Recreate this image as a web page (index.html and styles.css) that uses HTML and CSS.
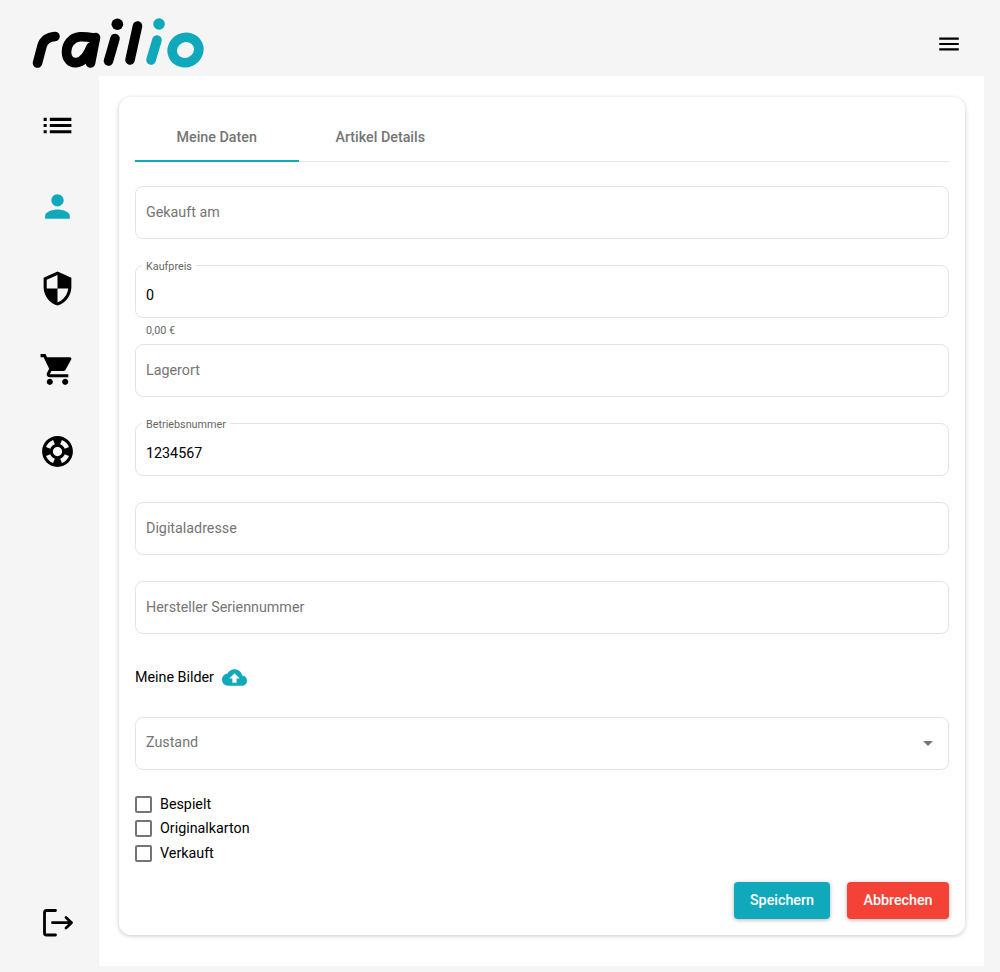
FILE: index.html
```html
<!DOCTYPE html>
<html lang="de">
<head>
<meta charset="utf-8">
<title>railio</title>
<link rel="stylesheet" href="styles.css">
</head>
<body>
<header class="topbar">
  <svg class="logo" viewBox="30 16 180 56" width="180" height="56" fill="none" stroke-linecap="round" stroke-linejoin="round" stroke-width="9.6">
    <g stroke="#000">
      <path d="M37.5 63 L42 46 C44 39 49 37 55 36.5"/>
      <path d="M94 38 C88 37 84 36.5 80 36.8 C71 37.5 66.5 45 66.5 52 C66.5 59 71 63.5 77 62.5 C83 61.5 88 55 91 47"/>
      <path d="M95.5 37.5 L90.5 63"/>
      <path d="M115 38.5 L108.5 61"/>
      <path d="M117.3 24.3 L117.4 24.3" stroke-width="11.5"/>
      <path d="M137.5 26 L130 60"/>
    </g>
    <g stroke="#0fa9bb">
      <path d="M157 40 L151 60"/>
      <path d="M159 24 L159.1 24" stroke-width="11.5"/>
      <ellipse cx="185.5" cy="50" rx="13.5" ry="12.5" transform="rotate(-25 185.5 50)"/>
    </g>
  </svg>
  <button class="menu-btn" type="button" aria-label="Menü">
    <svg viewBox="0 0 24 24" width="26" height="26"><path d="M3 18h18v-2H3v2zm0-5h18v-2H3v2zm0-7v2h18V6H3z"/></svg>
  </button>
</header>
<div class="shell">
  <nav class="sidebar">
    <div class="nav-top">
      <a class="nav-item"><svg viewBox="0 0 24 24" class="nav-icon"><path d="M3 13h2v-2H3v2zm0 4h2v-2H3v2zm0-8h2V7H3v2zm4 4h14v-2H7v2zm0 4h14v-2H7v2zM7 7v2h14V7H7z"/></svg></a>
      <a class="nav-item active"><svg viewBox="0 0 24 24" class="nav-icon"><path d="M12 12c2.21 0 4-1.79 4-4s-1.79-4-4-4-4 1.79-4 4 1.79 4 4 4zm0 2c-2.67 0-8 1.34-8 4v2h16v-2c0-2.66-5.33-4-8-4z"/></svg></a>
      <a class="nav-item"><svg viewBox="0 0 24 24" class="nav-icon"><path d="M12 1L3 5v6c0 5.55 3.84 10.74 9 12 5.16-1.26 9-6.45 9-12V5l-9-4zm0 10.99h7c-.53 4.12-3.28 7.79-7 8.94V12H5V6.3l7-3.11v8.8z"/></svg></a>
      <a class="nav-item"><svg viewBox="0 0 24 24" class="nav-icon"><path d="M7 18c-1.1 0-1.99.9-1.99 2S5.9 22 7 22s2-.9 2-2-.9-2-2-2zM1 2v2h2l3.6 7.59-1.35 2.45c-.16.28-.25.61-.25.96 0 1.1.9 2 2 2h12v-2H7.42c-.14 0-.25-.11-.25-.25l.03-.12.9-1.63h7.45c.75 0 1.41-.41 1.75-1.03l3.58-6.49c.08-.14.12-.31.12-.48 0-.55-.45-1-1-1H5.21l-.94-2H1zm16 16c-1.1 0-1.99.9-1.99 2s.89 2 1.99 2 2-.9 2-2-.9-2-2-2z"/></svg></a>
      <a class="nav-item"><svg viewBox="0 0 24 24" class="nav-icon"><path d="M12 2C6.48 2 2 6.48 2 12s4.48 10 10 10 10-4.48 10-10S17.52 2 12 2zm7.46 7.12l-2.78 1.15c-.51-1.36-1.58-2.44-2.95-2.94l1.15-2.78c2.1.8 3.77 2.47 4.58 4.57zM12 15c-1.66 0-3-1.34-3-3s1.34-3 3-3 3 1.34 3 3-1.34 3-3 3zM9.13 4.54l1.17 2.78c-1.38.5-2.47 1.59-2.98 2.97L4.54 9.13c.81-2.11 2.48-3.78 4.59-4.59zM4.54 14.87l2.78-1.15c.51 1.38 1.59 2.46 2.97 2.96l-1.17 2.78c-2.1-.81-3.77-2.48-4.58-4.59zm10.34 4.59l-1.15-2.78c1.37-.51 2.45-1.59 2.95-2.97l2.78 1.17c-.81 2.1-2.48 3.77-4.58 4.58z"/></svg></a>
    </div>
    <a class="nav-item logout">
      <svg viewBox="0 0 32 30" width="32" height="30" fill="none" stroke="#000" stroke-width="2.8" stroke-linecap="round" stroke-linejoin="round"><path d="M13.5 2.5H4.5Q2.5 2.5 2.5 4.5V25Q2.5 27 4.5 27H13.5"/><path d="M10.5 14.7H29.5M24 9.5L29.5 14.7L24 20"/></svg>
    </a>
  </nav>
  <main class="content">
    <section class="card">
      <div class="tabs">
        <button class="tab active" type="button">Meine Daten</button>
        <button class="tab" type="button">Artikel Details</button>
      </div>
      <form class="form">
        <div class="row"><div class="field"><input class="input" placeholder="Gekauft am"></div></div>
        <div class="row">
          <div class="field"><span class="float-label">Kaufpreis</span><input class="input filled" value="0"></div>
          <div class="hint">0,00 €</div>
        </div>
        <div class="row"><div class="field"><input class="input" placeholder="Lagerort"></div></div>
        <div class="row"><div class="field"><span class="float-label">Betriebsnummer</span><input class="input filled" value="1234567"></div></div>
        <div class="row"><div class="field"><input class="input" placeholder="Digitaladresse"></div></div>
        <div class="row"><div class="field"><input class="input" placeholder="Hersteller Seriennummer"></div></div>
        <div class="images">
          <span>Meine Bilder</span>
          <svg viewBox="0 0 24 24" width="25" height="25" class="upload"><path d="M19.35 10.04C18.67 6.59 15.64 4 12 4 9.11 4 6.6 5.64 5.35 8.04 2.34 8.36 0 10.91 0 14c0 3.31 2.69 6 6 6h13c2.76 0 5-2.24 5-5 0-2.64-2.05-4.78-4.65-4.96zM14 13v4h-4v-4H7l5-5 5 5h-3z"/></svg>
        </div>
        <div class="field select">
          <span class="select-text">Zustand</span>
          <svg viewBox="0 0 10 5" width="10" height="5" class="caret"><path d="M0 0h10L5 5z"/></svg>
        </div>
        <div class="checks">
          <label class="check"><span class="box"></span><span class="check-text">Bespielt</span></label>
          <label class="check"><span class="box"></span><span class="check-text">Originalkarton</span></label>
          <label class="check"><span class="box"></span><span class="check-text">Verkauft</span></label>
        </div>
        <div class="actions">
          <button class="btn save" type="button">Speichern</button>
          <button class="btn cancel" type="button">Abbrechen</button>
        </div>
      </form>
    </section>
  </main>
</div>
</body>
</html>
```

FILE: styles.css
```css
* { box-sizing: border-box; }
html, body { margin: 0; height: 972px; }
body {
  background: #f5f5f5;
  font-family: Roboto, "Liberation Sans", sans-serif;
  font-size: 14.3px;
  color: #000;
  overflow: hidden;
}
.topbar {
  height: 76px;
  display: flex;
  justify-content: space-between;
  padding: 16px 38px 0 30px;
}
.logo { display: block; }
.menu-btn {
  border: 0;
  background: none;
  padding: 0;
  margin-top: 15px;
  width: 26px;
  height: 26px;
}
.menu-btn svg { display: block; }
.shell { display: flex; height: 890px; margin-right: 16px; }
.sidebar {
  width: 99px;
  flex: none;
  display: flex;
  flex-direction: column;
  justify-content: space-between;
  padding: 8.5px 0 28px;
}
.nav-top { display: flex; flex-direction: column; }
.nav-item {
  height: 81.5px;
  display: flex;
  align-items: center;
  justify-content: center;
  padding-left: 16.5px;
}
.nav-icon { width: 37px; height: 37px; display: block; }
.nav-item.active .nav-icon { fill: #0fa9bb; }
.logout { height: 30px; padding-left: 17px; }
.content {
  flex: 1;
  background: #fff;
  padding: 21px 19px 31px 20px;
}
.card {
  height: 838px;
  background: #fff;
  border-radius: 12px;
  padding: 16px;
  box-shadow: 0 1px 4px rgba(0,0,0,.22);
}
.tabs {
  display: flex;
  height: 49px;
  border-bottom: 1px solid #e6e6e6;
}
.tab {
  width: 163.5px;
  height: 49px;
  border: 0;
  background: none;
  padding: 0 0 1px;
  font: 500 14.3px Roboto, sans-serif;
  color: #757575;
}
.tab.active { box-shadow: inset 0 -2px 0 #0fa9bb; }
.form { display: flex; flex-direction: column; margin-top: 24px; }
.row { height: 79px; }
.field {
  position: relative;
  height: 52.6px;
  border: 1px solid #e4e4e4;
  border-radius: 8px;
}
.input {
  display: block;
  width: 100%;
  height: 100%;
  border: 0;
  outline: 0;
  background: none;
  padding: 5px 10px;
  font: 400 14.3px Roboto, sans-serif;
  color: #000;
  border-radius: 8px;
}
.input.filled { padding: 10px 10px 3px; }
.input::placeholder { color: #757575; opacity: 1; }
.float-label {
  position: absolute;
  left: 6px;
  top: -6px;
  padding: 0 4px;
  background: #fff;
  font-size: 10.8px;
  line-height: 13px;
  color: #666;
}
.hint {
  font-size: 10.8px;
  line-height: 13px;
  color: #666;
  padding: 6px 0 0 11px;
}
.images {
  height: 57px;
  display: flex;
  align-items: center;
  gap: 8.5px;
  padding-bottom: 23px;
}
.upload { fill: #0fa9bb; }
.select {
  display: flex;
  align-items: center;
  justify-content: space-between;
  padding: 0 15px 3px 10px;
}
.select-text { color: #757575; }
.caret { fill: #757575; margin-top: 3px; }
.checks {
  display: flex;
  flex-direction: column;
  gap: 7.5px;
  margin-top: 26.4px;
}
.check { display: flex; align-items: center; gap: 8px; height: 17px; }
.check-text { margin-bottom: 1px; }
.box {
  width: 17px;
  height: 17px;
  border: 2px solid #757575;
  border-radius: 2px;
}
.actions {
  display: flex;
  justify-content: flex-end;
  gap: 17px;
  margin-top: 20px;
}
.btn {
  height: 37px;
  border: 0;
  border-radius: 4px;
  padding: 0 0 1px;
  font: 500 14.3px Roboto, sans-serif;
  color: #fff;
  box-shadow: 0 1px 4px rgba(0,0,0,.3);
}
.save { width: 96px; background: #0fa9bb; }
.cancel { width: 102px; background: #f44336; }
```
